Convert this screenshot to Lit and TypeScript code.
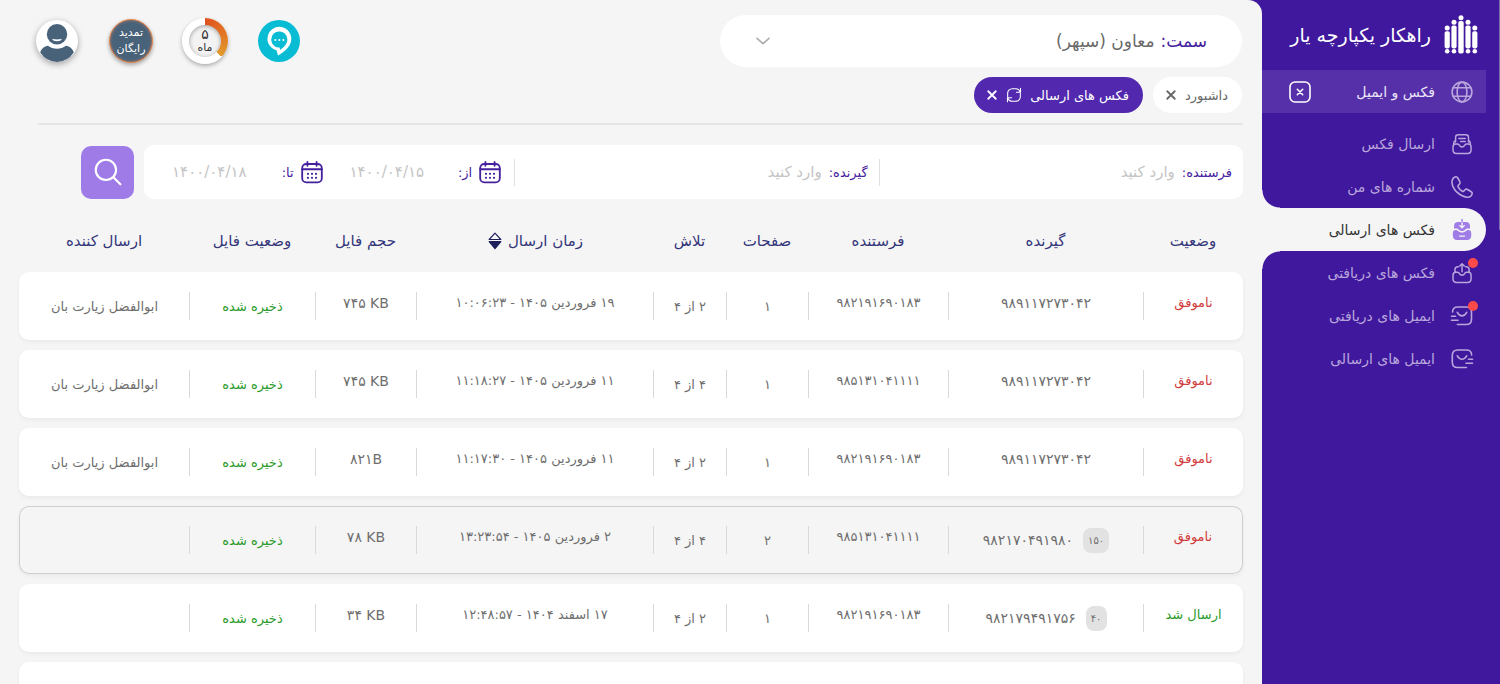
import { LitElement, html, svg, css, nothing } from "lit";
import { customElement, property, state } from "lit/decorators.js";
import { classMap } from "lit/directives/class-map.js";

interface FaxRow {
  status: string;
  ok?: boolean;
  receiver: string;
  ext?: string;
  sender: string;
  pages: string;
  tries: string;
  time: string;
  size: string;
  file: string;
  by: string;
  selected?: boolean;
}

const rows: FaxRow[] = [
  { status: "ناموفق", receiver: "۹۸۹۱۱۷۲۷۳۰۴۲", sender: "۹۸۲۱۹۱۶۹۰۱۸۳", pages: "۱", tries: "۲ از ۴", time: "۱۹ فروردین ۱۴۰۵ - ۱۰:۰۶:۲۳", size: "۷۴۵ KB", file: "ذخیره شده", by: "ابوالفضل زیارت بان" },
  { status: "ناموفق", receiver: "۹۸۹۱۱۷۲۷۳۰۴۲", sender: "۹۸۵۱۳۱۰۴۱۱۱۱", pages: "۱", tries: "۴ از ۴", time: "۱۱ فروردین ۱۴۰۵ - ۱۱:۱۸:۲۷", size: "۷۴۵ KB", file: "ذخیره شده", by: "ابوالفضل زیارت بان" },
  { status: "ناموفق", receiver: "۹۸۹۱۱۷۲۷۳۰۴۲", sender: "۹۸۲۱۹۱۶۹۰۱۸۳", pages: "۱", tries: "۲ از ۴", time: "۱۱ فروردین ۱۴۰۵ - ۱۱:۱۷:۳۰", size: "۸۲۱B", file: "ذخیره شده", by: "ابوالفضل زیارت بان" },
  { status: "ناموفق", receiver: "۹۸۲۱۷۰۴۹۱۹۸۰", ext: "۱۵۰", sender: "۹۸۵۱۳۱۰۴۱۱۱۱", pages: "۲", tries: "۴ از ۴", time: "۲ فروردین ۱۴۰۵ - ۱۳:۲۳:۵۴", size: "۷۸ KB", file: "ذخیره شده", by: "", selected: true },
  { status: "ارسال شد", ok: true, receiver: "۹۸۲۱۷۹۴۹۱۷۵۶", ext: "۴۰", sender: "۹۸۲۱۹۱۶۹۰۱۸۳", pages: "۱", tries: "۲ از ۴", time: "۱۷ اسفند ۱۴۰۴ - ۱۲:۴۸:۵۷", size: "۳۴ KB", file: "ذخیره شده", by: "" },
];

const icons = {
  logo: svg`<g fill="#fff"><circle cx="17" cy="2.800" r="2.500"/><circle cx="10" cy="7.200" r="2.500"/><circle cx="24" cy="7.200" r="2.500"/><circle cx="3.200" cy="13" r="2.500"/><circle cx="30.800" cy="13" r="2.500"/><rect x="14.300" y="6" width="5.400" height="32.500" rx="1.800"/><rect x="7.400" y="10.400" width="5.200" height="23" rx="1.800"/><rect x="21.400" y="10.400" width="5.200" height="23" rx="1.800"/><rect x=".6" y="16.200" width="5.200" height="17.200" rx="1.800"/><rect x="28.200" y="16.200" width="5.200" height="17.200" rx="1.800"/><circle cx="3.200" cy="36.200" r="2.300"/><circle cx="10" cy="36.200" r="2.300"/><circle cx="24" cy="36.200" r="2.300"/><circle cx="30.800" cy="36.200" r="2.300"/></g>`,
  globe: svg`<circle cx="12" cy="12" r="9.900"/><ellipse cx="12" cy="12" rx="4.900" ry="9.900"/><path d="M3.200 7.800h17.600M3.200 16.200h17.600"/>`,
  closeBox: svg`<rect x="2" y="2" width="20" height="20" rx="5"/><path d="M9.300 9.300l5.400 5.400M14.700 9.300l-5.400 5.400"/>`,
  send: svg`<g transform="translate(1 1) scale(.92)"><path d="M5 9.800V4.600A2.800 2.800 0 0 1 7.800 1.800h8.400A2.800 2.800 0 0 1 19 4.600v5.200M8.500 6h7M10.500 9.300h5M5 8.200A3.300 3.300 0 0 0 3 11v1.800M19 8.200a3.300 3.300 0 0 1 2 2.800v1.800M5.200 12h1.900c1 0 1.700.5 2.100 1.400.5 1 1.500 1.700 2.800 1.700s2.300-.7 2.800-1.700c.4-.9 1.100-1.400 2.100-1.400h1.900c1.800 0 3 1.300 3 3.100v3.300c0 2.400-1.600 3.800-3.900 3.800H6.100c-2.300 0-3.900-1.400-3.900-3.800v-3.300C2.200 13.300 3.400 12 5.200 12z"/></g>`,
  phone: svg`<path d="M2.200 5.200c.4-1.600 1.700-3 3.400-3.400 1-.2 1.700.3 2.200 1.200l2 3.700c.5.900.3 1.800-.4 2.500L8.300 10.400c-.4.4-.5.900-.2 1.500 1 1.900 2.300 3.300 4.100 4.400.6.300 1.100.2 1.500-.2l1.300-1.300c.7-.7 1.600-.8 2.500-.3l3.700 2.200c.9.500 1.200 1.300.9 2.200-.6 2.200-2.700 3.500-5 3.300C9.500 21.200 2.700 14.500 2 7.800c-.1-.9 0-1.700.2-2.600z"/>`,
  sent: svg`<g transform="translate(1 1) scale(.92)"><g fill="#9f7ce6" stroke="none"><path d="M3.400 10.500V7.500c0-2.600 1.600-4.300 4.200-4.300h8.800c2.600 0 4.200 1.700 4.200 4.300v3c-1-.3-2.300-.3-3.300-.1-1.500.3-2.100 2.700-5.300 2.700s-3.800-2.400-5.300-2.700c-1-.2-2.300-.2-3.300.1z"/><path d="M5.300 12c2.400 0 2.700 2.700 6.700 2.700s4.300-2.700 6.700-2.700c2 0 3.300 1.300 3.300 3.500v2.700c0 3-1.700 4.500-4.500 4.500h-11c-2.800 0-4.500-1.500-4.500-4.500v-2.700C2 13.300 3.300 12 5.300 12z"/></g><path stroke="#f5f5f5" stroke-width="1.500" d="M9.300 18.600h5.400M12 3v6M9.600 7.200L12 9.600l2.400-2.400"/><path stroke="#9f7ce6" stroke-width="1.500" d="M12 .5v2.500"/></g>`,
  received: svg`<g transform="translate(1 1) scale(.92)"><path d="M12 10.500V2M9.500 4.300L12 1.800l2.500 2.500M8 5.200h-.5C5.400 5.200 4.300 6.500 4.300 8.500v2.400M16 5.200h.5c2.100 0 3.200 1.300 3.200 3.300v2.400M5.200 11.200h1.900c1 0 1.700.5 2.100 1.400.5 1 1.500 1.700 2.800 1.700s2.300-.7 2.800-1.700c.4-.9 1.100-1.400 2.100-1.400h1.900c1.800 0 3 1.300 3 3.100v3.900c0 2.600-1.600 4-3.900 4H6.100c-2.300 0-3.900-1.400-3.900-4v-3.900c0-1.800 1.200-3.100 3-3.100z"/></g>`,
  mailIn: svg`<path d="M2.600 8C2.600 4.700 4.500 3 7.800 3h8.400c3.400 0 5.300 1.800 5.300 5.300v6.900c0 3.500-1.900 5.300-5.300 5.300H7.400M7.300 8.300c1.300 2.300 3 3.600 4.700 3.600s3.400-1.300 4.700-3.600M1.500 12.300h4M1.500 16.300h6.500"/>`,
  mailOut: svg`<path d="M21.600 8c0-3.300-1.900-5-5.200-5H7.600C4.200 3 2.300 4.800 2.300 8.300v6.900c0 3.500 1.900 5.300 5.300 5.300h8.800M7.300 8.800c1.300 2.300 3 3.400 4.700 3.400s3.400-1.100 4.700-3.400M18.500 12.300h4M16 16.300h6.500"/>`,
  calendar: svg`<rect x="1.300" y="3.300" width="21.400" height="20" rx="4.500"/><path d="M1.300 9h21.400M7 1v4.200M17 1v4.200"/><g fill="currentColor" stroke="none"><circle cx="7.600" cy="14" r="1.200"/><circle cx="12" cy="14" r="1.200"/><circle cx="16.400" cy="14" r="1.200"/><circle cx="7.600" cy="18.400" r="1.200"/><circle cx="12" cy="18.400" r="1.200"/><circle cx="16.400" cy="18.400" r="1.200"/></g>`,
  search: svg`<circle cx="10.200" cy="10.200" r="8.700"/><path d="M16.600 16.600l6 6"/>`,
  refresh: svg`<path d="M2.500 14.500V10A7 7 0 0 1 9.500 2.500h5c3.300 0 5.800 2 7 5M21.800 1.800v6.200h-6.200M21.500 9.500V14a7 7 0 0 1-7 7.500h-5c-3.300 0-5.800-2-7-5M2.200 22.200V16h6.200"/>`,
  cross: svg`<path d="M4.500 4.500l15 15M19.500 4.500l-15 15"/>`,
  chevron: svg`<path d="M3 8l9 8 9-8"/>`,
  sort: svg`<path stroke-width="1.500" d="M12 1.500l7.800 8.500H4.200z"/><path fill="currentColor" d="M4.200 12.800h15.600L12 22z"/>`,
};

/** Square line icon on a 24-unit grid. */
@customElement("line-icon")
class LineIcon extends LitElement {
  @property() name: keyof typeof icons = "cross";
  static styles = css`
    :host { display: inline-flex; width: 24px; height: 24px; flex: none; }
    .svg { width: 100%; height: 100%; overflow: visible; fill: none; stroke: currentColor; stroke-width: var(--stroke, 1.6); stroke-linecap: round; stroke-linejoin: round; }
  `;
  render() {
    return html`<svg class="svg" viewBox="0 0 24 24" aria-hidden="true">${icons[this.name]}</svg>`;
  }
}

@customElement("side-menu")
class SideMenu extends LitElement {
  static styles = css`
    :host { display: block; background: linear-gradient(#7d6cae, #7d6cae) top right / 1px 230px no-repeat, #40189d; color: #b9a6dc; padding: 15px 14px 0 0; box-sizing: border-box; }
    .brand { display: flex; align-items: center; gap: 13px; height: 39px; padding-right: 8px; margin-bottom: 16px; color: #fff; font-size: 19px; white-space: nowrap; }
    .logo { width: 34px; height: 39px; flex: none; }
    .group { display: flex; align-items: center; height: 43px; padding: 0 12px; gap: 15px; background: #5630a8; color: #ece6f8; margin-bottom: 9px; font-size: 14px; }
    .group .title { flex: 1; }
    .group .globe { color: #b9a6dc; }
    .close { display: flex; border: 0; padding: 0; margin-left: 14px; background: none; color: #fff; cursor: pointer; }
    .list { list-style: none; margin: 0; padding: 0; }
    .link { display: flex; align-items: center; gap: 15px; height: 43px; padding: 0 12px; color: inherit; text-decoration: none; font-size: 14px; white-space: nowrap; position: relative; }
    .active { background: #f5f5f5; color: #333; border-radius: 0 22px 22px 0; }
    .active::before, .active::after { content: ""; position: absolute; left: 0; width: 18px; height: 18px; }
    .active::before { bottom: 100%; background: radial-gradient(circle at 100% 0, #40189d 17px, #f5f5f5 18px); }
    .active::after { top: 100%; background: radial-gradient(circle at 100% 100%, #40189d 17px, #f5f5f5 18px); }
    .glyph { position: relative; display: flex; }
    .dot { position: absolute; top: -3px; right: -4px; width: 10px; height: 10px; border-radius: 50%; background: #ff4a4a; }
  `;
  private items: { label: string; icon: keyof typeof icons; active?: boolean; dot?: boolean }[] = [
    { label: "ارسال فکس", icon: "send" },
    { label: "شماره های من", icon: "phone" },
    { label: "فکس های ارسالی", icon: "sent", active: true },
    { label: "فکس های دریافتی", icon: "received", dot: true },
    { label: "ایمیل های دریافتی", icon: "mailIn", dot: true },
    { label: "ایمیل های ارسالی", icon: "mailOut" },
  ];
  render() {
    return html`
      <div class="brand"><svg class="logo" viewBox="0 0 34 39" aria-hidden="true">${icons.logo}</svg><span>راهکار یکپارچه یار</span></div>
      <div class="group">
        <line-icon class="globe" name="globe"></line-icon><span class="title">فکس و ایمیل</span>
        <button class="close" aria-label="بستن"><line-icon name="closeBox"></line-icon></button>
      </div>
      <ul class="list">
        ${this.items.map((i) => html`<li><a href="#" class=${classMap({ link: true, active: !!i.active })}>
          <span class="glyph"><line-icon name=${i.icon}></line-icon>${i.dot ? html`<span class="dot"></span>` : nothing}</span>
          <span>${i.label}</span></a></li>`)}
      </ul>`;
  }
}

@customElement("top-bar")
class TopBar extends LitElement {
  static styles = css`
    :host { display: flex; justify-content: space-between; align-items: center; height: 52px; padding-right: 1px; }
    .role { display: flex; align-items: center; flex: 0 1 522px; box-sizing: border-box; height: 52px; padding: 0 35px; border-radius: 26px; background: #fff; font-size: 17px; }
    .role label { color: #46219e; white-space: nowrap; }
    .role select { appearance: none; flex: 1; min-width: 0; border: 0; background: none; padding: 0 6px 0 0; font: inherit; color: #6a6a6a; outline: 0; }
    .role line-icon { width: 16px; height: 16px; color: #b0b0b0; --stroke: 2.6; }
    .badges { display: flex; align-items: center; gap: 28px; padding-left: 15px; }
    .badge { display: flex; align-items: center; justify-content: center; width: 46px; height: 46px; padding: 0; border: 0; background: none; font-family: inherit; cursor: pointer; }
    .art { width: 46px; height: 46px; overflow: visible; }
    .raise { filter: drop-shadow(0 2px 3px rgba(0, 0, 0, 0.35)); }
    .renew { box-sizing: border-box; width: 44px; height: 44px; border-radius: 50%; border: 1px solid #ec8a4c; background: #48627a; color: #fff; font-size: 11px; line-height: 16px; display: grid; place-content: center; box-shadow: 0 2px 4px rgba(0, 0, 0, 0.35), inset 0 0 3px #c08060; }
    .ring { box-sizing: border-box; width: 46px; height: 46px; border-radius: 50%; background: conic-gradient(#e0501c, #e29a2c 37%, #fff 37%); padding: 7px; box-shadow: 0 2px 4px rgba(0, 0, 0, 0.3); }
    .core { height: 32px; border-radius: 50%; background: #f3f3f3; box-shadow: inset 0 1px 4px rgba(0, 0, 0, 0.35); display: grid; place-content: center; font-size: 11px; line-height: 13px; color: #333; }
    .count { font-size: 14px; }
  `;
  render() {
    return html`
      <div class="role"><label for="role">سمت:</label><select id="role"><option>معاون (سپهر)</option></select><line-icon name="chevron"></line-icon></div>
      <div class="badges">
        <button class="badge" aria-label="پشتیبانی"><svg class="art" viewBox="0 0 46 46"><circle cx="23" cy="23" r="21" fill="#08bcd4"/><path d="M20.500 32.300A11.900 11.900 0 1 1 35.200 22c-.3 6-6.200 11.500-13.200 15.500z" fill="#fff"/><path d="M23.600 29.600A8.100 8.100 0 1 1 31.400 21.600c0 4-3.300 7.700-7.200 10.300z" fill="#08bcd4"/><g fill="#fff"><circle cx="19.300" cy="22" r="1"/><circle cx="23.300" cy="22" r="1"/><circle cx="27.300" cy="22" r="1"/></g></svg></button>
        <button class="badge"><span class="ring"><span class="core"><span class="count">۵</span><span>ماه</span></span></span></button>
        <button class="badge"><span class="renew"><span>تمدید</span><span>رایگان</span></span></button>
        <button class="badge" aria-label="حساب کاربری"><svg class="art raise" viewBox="0 0 46 46"><circle cx="23" cy="23" r="21" fill="#fff"/><circle cx="23" cy="16.200" r="10.200" fill="#48627a"/><path d="M18 20.800c2 .8 8 .8 10 0-.6 1.700-2.500 2.500-5 2.500s-4.400-.8-5-2.500z" fill="#fff"/><path d="M6.200 34.500C7.500 30.500 10.500 28 14 27.700c5 3.900 13 3.900 18 0 3.500.3 6.500 2.800 7.800 6.800A21 21 0 0 1 23 44 21 21 0 0 1 6.200 34.500z" fill="#48627a"/></svg></button>
      </div>`;
  }
}

@customElement("filter-bar")
class FilterBar extends LitElement {
  static styles = css`
    :host { display: flex; gap: 10px; align-items: center; padding-left: 62px; }
    .panel { flex: 1; min-width: 0; display: flex; align-items: center; height: 54px; border-radius: 10px; background: #fff; color: #46219e; font-size: 13px; }
    .field { display: flex; align-items: center; gap: 7px; height: 27px; min-width: 0; box-sizing: border-box; padding-right: 11px; border-left: 1px solid #e0e0e0; flex: 365; }
    .dates { display: flex; flex: 370; min-width: 0; padding-right: 13px; }
    .date { display: flex; flex: 1; align-items: center; gap: 7px; min-width: 0; }
    label { white-space: nowrap; }
    .input { flex: 1; min-width: 0; width: 0; border: 0; padding: 0; background: none; outline: 0; font: inherit; font-size: 15px; }
    .input::placeholder { color: #c4c4c4; opacity: 1; }
    .date .input { text-align: center; }
    .search { display: grid; place-content: center; width: 53px; height: 53px; border: 0; padding: 0; border-radius: 10px; background: #9f7be8; color: #fff; cursor: pointer; --stroke: 1.8; }
    .search line-icon { width: 28px; height: 28px; }
    .date line-icon { width: 22px; height: 24px; --stroke: 2; }
  `;
  render() {
    return html`
      <div class="panel">
        <div class="field"><label for="from-no">فرستنده:</label><input class="input" id="from-no" placeholder="وارد کنید" /></div>
        <div class="field"><label for="to-no">گیرنده:</label><input class="input" id="to-no" placeholder="وارد کنید" /></div>
        <div class="dates">
          <div class="date"><line-icon name="calendar"></line-icon><label for="since">از:</label><input class="input" id="since" placeholder="۱۴۰۰/۰۴/۱۵" /></div>
          <div class="date"><line-icon name="calendar"></line-icon><label for="until">تا:</label><input class="input" id="until" placeholder="۱۴۰۰/۰۴/۱۸" /></div>
        </div>
      </div>
      <button class="search" aria-label="جستجو"><line-icon name="search"></line-icon></button>`;
  }
}

@customElement("fax-table")
class FaxTable extends LitElement {
  static styles = css`
    :host { display: block; }
    .table { width: 100%; table-layout: fixed; border-collapse: separate; border-spacing: 0 10px; font-size: 13px; color: #6e6e6e; }
    .w-status { width: 100px; } .w-receiver { width: 195px; } .w-sender { width: 140px; }
    .w-pages { width: 82px; } .w-tries { width: 73px; } .w-time { width: 237px; }
    .w-size { width: 101px; } .w-file { width: 126px; } .w-by { width: 170px; }
    th { height: 43px; padding: 0; font-weight: 400; font-size: 15px; color: #34367a; white-space: nowrap; }
    .sort { display: inline-flex; align-items: center; gap: 4px; border: 0; padding: 0; background: none; font: inherit; color: inherit; cursor: pointer; }
    .sort line-icon { width: 18px; height: 20px; color: #1f1f5c; }
    .row { border-radius: 10px; box-shadow: 0 2px 4px rgba(0, 0, 0, 0.05); }
    td { height: 68px; padding: 0; box-sizing: border-box; background: #fff; }
    td:first-child { border-radius: 0 10px 10px 0; }
    td:last-child { border-radius: 10px 0 0 10px; }
    td:only-child { border-radius: 10px; }
    .selected td { background: #f5f5f5; border: 1px solid #cfcfcf; border-width: 1px 0; }
    .selected td:first-child { border-right-width: 1px; }
    .selected td:last-child { border-left-width: 1px; }
    .cell { display: flex; justify-content: center; align-items: center; gap: 10px; height: 28px; border-left: 1px solid #d9d9d9; white-space: nowrap; }
    .high { align-items: flex-start; line-height: 22px; }
    .num { font-size: 14px; }
    .last { border-left-color: transparent; }
    .bad { color: #d13c3c; }
    .good { color: #2a9a2a; }
    .ext { height: 25px; line-height: 25px; padding: 0 5px; border-radius: 8px; background: #e2e2e2; font-size: 10px; }
  `;
  render() {
    return html`
      <table class="table">
        <colgroup><col class="w-status" /><col class="w-receiver" /><col class="w-sender" /><col class="w-pages" /><col class="w-tries" /><col class="w-time" /><col class="w-size" /><col class="w-file" /><col class="w-by" /></colgroup>
        <thead><tr>
          <th>وضعیت</th><th>گیرنده</th><th>فرستنده</th><th>صفحات</th><th>تلاش</th>
          <th><button class="sort">زمان ارسال <line-icon name="sort"></line-icon></button></th>
          <th>حجم فایل</th><th>وضعیت فایل</th><th>ارسال کننده</th>
        </tr></thead>
        <tbody>
          ${rows.map((r) => html`<tr class=${classMap({ row: true, selected: !!r.selected })}>
            <td><div class="cell high ${r.ok ? "good" : "bad"}">${r.status}</div></td>
            <td><div class=${classMap({ cell: true, num: true, high: !r.ext })}>${r.ext ? html`<span class="ext">${r.ext}</span>` : nothing}<span>${r.receiver}</span></div></td>
            <td><div class="cell high">${r.sender}</div></td>
            <td><div class="cell">${r.pages}</div></td>
            <td><div class="cell">${r.tries}</div></td>
            <td><div class="cell high">${r.time}</div></td>
            <td><div class="cell high num"><span dir="ltr">${r.size}</span></div></td>
            <td><div class="cell good">${r.file}</div></td>
            <td><div class="cell last">${r.by}</div></td>
          </tr>`)}
          <tr class="row"><td colspan="9"></td></tr>
        </tbody>
      </table>`;
  }
}

@customElement("app-root")
class AppRoot extends LitElement {
  @state() private tab = "فکس های ارسالی";
  static styles = css`
    :host { display: flex; direction: rtl; height: 100vh; overflow: hidden; background: #40189d; font-family: "DejaVu Sans", Roboto, sans-serif; }
    side-menu { flex: 0 0 238px; }
    .main { flex: 1; min-width: 0; box-sizing: border-box; padding: 15px 19px 0; background: #f5f5f5; border-top-right-radius: 14px; overflow: hidden; }
    .tabs { display: flex; gap: 10px; padding: 10px 1px 10px 0; margin-left: 19px; border-bottom: 2px solid #e6e6e6; margin-bottom: 20px; }
    .tab { display: flex; align-items: center; gap: 8px; height: 36px; padding: 0 14px 0 12px; border-radius: 18px; background: #fff; color: #666; font-size: 13px; --stroke: 3.6; }
    .on { background: #5128ae; color: #fff; }
    .name, .act { display: flex; border: 0; padding: 0; background: none; color: inherit; font: inherit; cursor: pointer; }
    .act line-icon { width: 12px; height: 12px; }
    .act .spin { width: 16px; height: 16px; --stroke: 1.6; }
    fax-table { margin-top: 10px; }
  `;
  private tabItem(label: string, refresh = false) {
    return html`<div class=${classMap({ tab: true, on: this.tab === label })}>
      <button class="name" @click=${() => (this.tab = label)}>${label}</button>
      ${refresh ? html`<button class="act" aria-label="بارگذاری دوباره"><line-icon class="spin" name="refresh"></line-icon></button>` : nothing}
      <button class="act" aria-label="بستن"><line-icon name="cross"></line-icon></button>
    </div>`;
  }
  render() {
    return html`
      <side-menu></side-menu>
      <main class="main">
        <top-bar></top-bar>
        <div class="tabs">${this.tabItem("داشبورد")}${this.tabItem("فکس های ارسالی", true)}</div>
        <filter-bar></filter-bar>
        <fax-table></fax-table>
      </main>`;
  }
}
